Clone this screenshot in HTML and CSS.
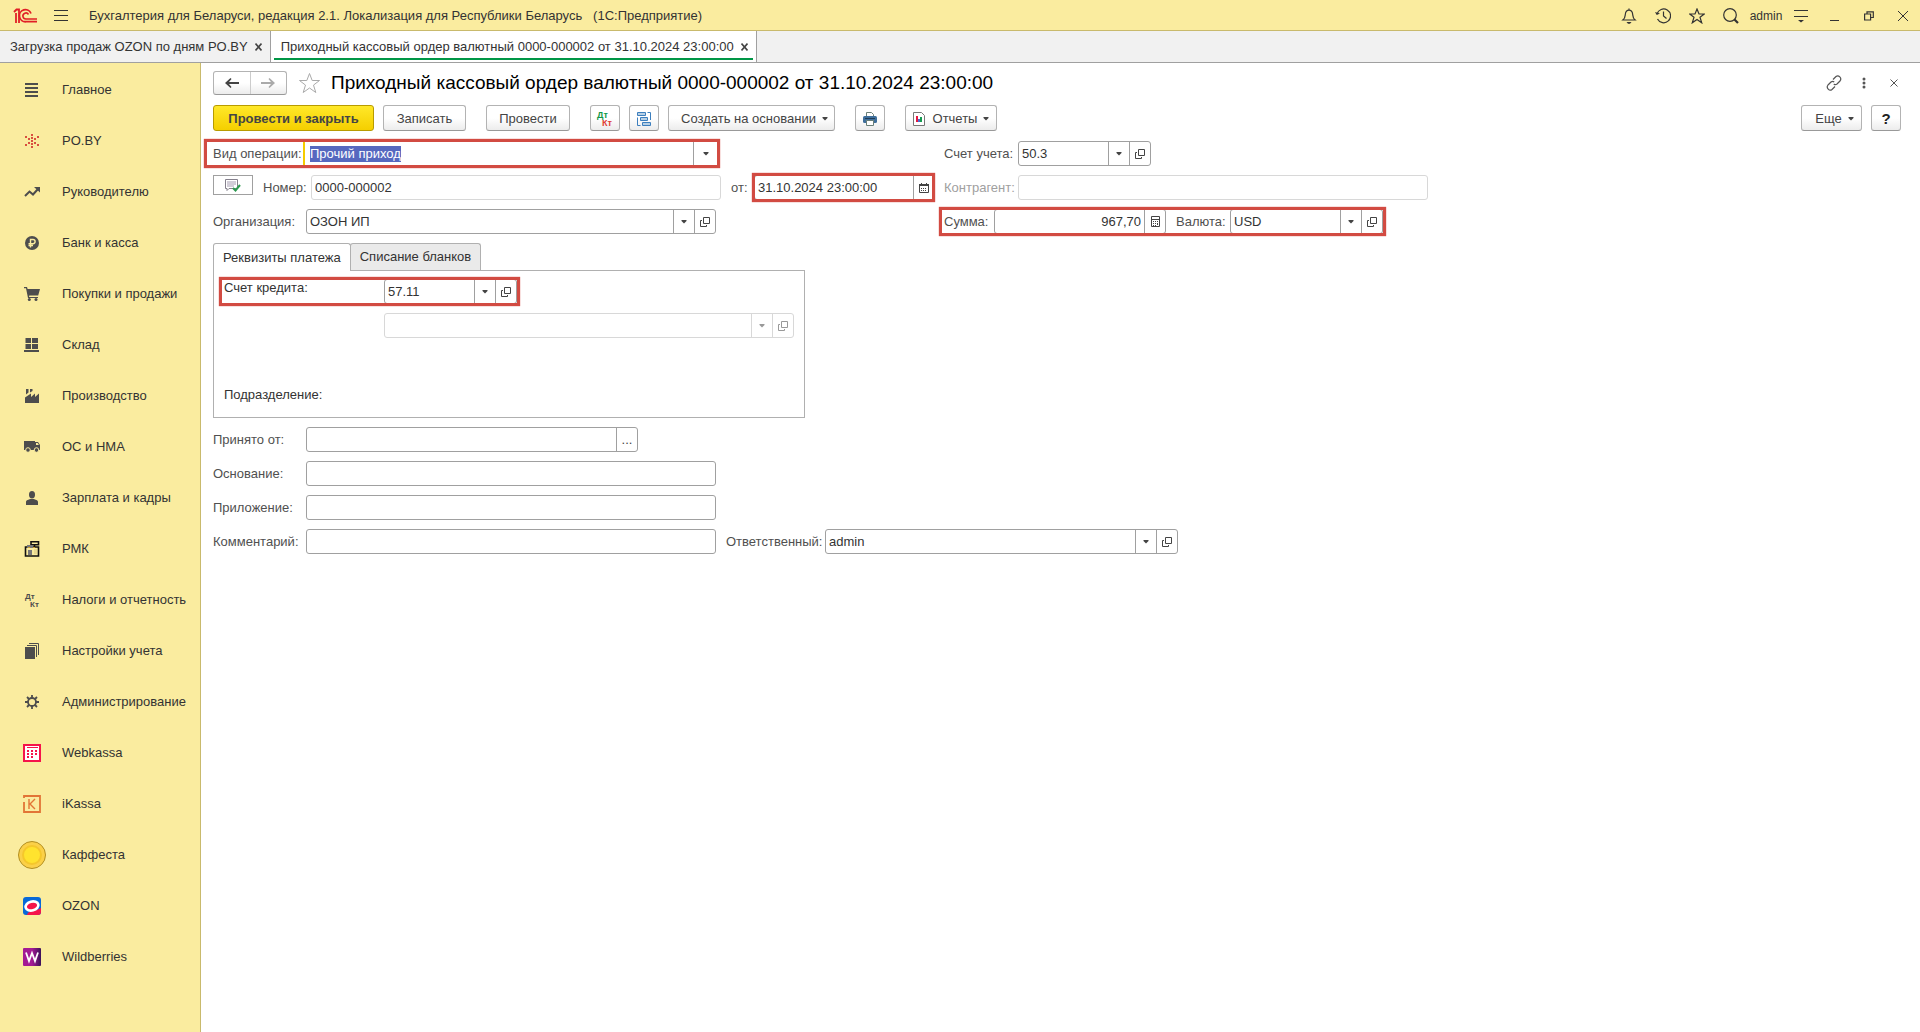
FILE: index.html
```html
<!DOCTYPE html>
<html lang="ru">
<head>
<meta charset="utf-8">
<title>Приходный кассовый ордер валютный</title>
<link rel="stylesheet" href="styles.css">
</head>
<body>
<svg class="sprite" aria-hidden="true">
  <symbol id="caret" viewBox="0 0 6 4"><path d="M.5 0h5v1L3 3.500.5 1z"/></symbol>
  <symbol id="open" viewBox="0 0 10 10"><path d="M3.500.5h6v6h-6zM2 3.500H.5v6h6V8" fill="none" stroke="currentColor"/></symbol>
</svg>

<header class="topbar">
  <svg class="logo" width="24" height="16" viewBox="0 0 24 16" fill="none" stroke="#e01f26"><path d="M1 4l2.500-2.500H6V15M3 5v10" stroke-width="1.800"/><path d="M18 5.500A6 6 0 1 0 13 13.700H24" stroke-width="1.800"/><path d="M15.500 6.500A3 3 0 1 0 13 11H24" stroke-width="1.600"/></svg>
  <button class="icon-btn" aria-label="Меню"><svg width="14" height="12" viewBox="0 0 14 12" stroke="currentColor"><path d="M0 .5h14M0 5.500h14M0 10.500h14"/></svg></button>
  <span class="app-title">Бухгалтерия для Беларуси, редакция 2.1. Локализация для Республики Беларусь &nbsp; (1С:Предприятие)</span>
  <div class="top-tools">
    <button class="icon-btn" aria-label="Уведомления"><svg width="16" height="16" viewBox="0 0 16 16" fill="none" stroke="currentColor" stroke-width="1.200"><path d="M8 .5V2M2 12c2-1.500 2-3 2.300-5.500C4.600 3.500 6 2.200 8 2.200s3.400 1.300 3.700 4.300C12 9 12 10.500 14 12zM1 12h14"/><path d="M5.500 14h5L9 15.700H7z" fill="currentColor" stroke="none"/></svg></button>
    <button class="icon-btn" aria-label="История"><svg width="16" height="16" viewBox="0 0 16 16" fill="none" stroke="currentColor" stroke-width="1.200"><path d="M2 6a6.900 6.900 0 1 1 .5 5M8.500 3.500V8l3 2.500"/><path d="M0 4l1.700 3L5 5.500z" fill="currentColor" stroke="none"/></svg></button>
    <button class="icon-btn" aria-label="Избранное"><svg width="16" height="16" viewBox="0 0 16 16" fill="none" stroke="currentColor" stroke-width="1.200"><path d="M8 1l2 5h5.300L11 9.300l1.700 5.500L8 11.500l-4.700 3.300L5 9.300.7 6H6z"/></svg></button>
    <button class="icon-btn" aria-label="Поиск"><svg width="16" height="16" viewBox="0 0 16 16" fill="none" stroke="currentColor" stroke-width="1.200"><circle cx="7" cy="7" r="6.300"/><path d="M11.500 11.500L15 15" stroke-width="2.200"/></svg></button>
    <span class="user">admin</span>
    <button class="icon-btn" aria-label="Настройки"><svg width="14" height="14" viewBox="0 0 14 14"><path d="M0 1.500h14M0 7.500h14" stroke="currentColor"/><path d="M4 11h6l-3 2.500z" fill="currentColor"/></svg></button>
    <button class="icon-btn" aria-label="Свернуть"><svg width="10" height="10" viewBox="0 0 10 10"><path d="M0 9.500h9" stroke="currentColor"/></svg></button>
    <button class="icon-btn" aria-label="Восстановить"><svg width="10" height="10" viewBox="0 0 10 10" fill="none" stroke="currentColor" stroke-width="1.200"><path d="M.6 3h6v6h-6zM3 3V.8h6.300V6.500H7"/></svg></button>
    <button class="icon-btn" aria-label="Закрыть"><svg width="10" height="10" viewBox="0 0 10 10" stroke="currentColor"><path d="M0 0l10 10M10 0L0 10"/></svg></button>
  </div>
</header>

<nav class="doc-tabs">
  <div class="doc-tab"><a href="#sales">Загрузка продаж OZON по дням PO.BY</a><button class="tab-close" aria-label="Закрыть вкладку"><svg width="7" height="8" viewBox="0 0 7 8" stroke="currentColor" stroke-width="1.600"><path d="M.5.5l6 7M6.500.5l-6 7"/></svg></button></div>
  <div class="doc-tab current"><a href="#order">Приходный кассовый ордер валютный 0000-000002 от 31.10.2024 23:00:00</a><button class="tab-close" aria-label="Закрыть вкладку"><svg width="7" height="8" viewBox="0 0 7 8" stroke="currentColor" stroke-width="1.600"><path d="M.5.5l6 7M6.500.5l-6 7"/></svg></button></div>
</nav>

<div class="workspace">
  <nav class="sidebar">
    <a href="#"><svg width="14" height="14" viewBox="0 0 14 14"><path d="M0 0h13v2H0zM0 4h13v2H0zM0 8h13v2H0zM0 12h13v2H0z"/></svg>Главное</a>
    <a href="#"><svg width="16" height="14" viewBox="0 0 16 14" fill="#d8503f"><path d="M7 0h2v2H7zM1 2h2v2H1zM13 2h2v2h-2zM7 3h2v2H7zM4 4h2v2H4zM10 4h2v2h-2zM7 6h2v2H7zM4 8h2v2H4zM10 8h2v2h-2zM1 10h2v2H1zM13 10h2v2h-2zM7 9h2v2H7zM7 12h2v2H7z"/></svg>PO.BY</a>
    <a href="#"><svg width="16" height="10" viewBox="0 0 16 10"><path d="M1 9l4.500-4.500 3.500 3L14 2" fill="none" stroke="currentColor" stroke-width="2"/><path d="M10 0h6v5.500z"/></svg>Руководителю</a>
    <a href="#"><svg width="14" height="14" viewBox="0 0 14 14"><circle cx="7" cy="7" r="7"/><path d="M5.500 11.500v-8H8a2 2 0 0 1 0 4.200H3.500M3.500 9.500H8" fill="none" stroke="#faec9f" stroke-width="1.400"/></svg>Банк и касса</a>
    <a href="#"><svg width="16" height="14" viewBox="0 0 16 14"><path d="M0 0h3l.6 2H16l-1.800 6.500H5.300L5 10h9v1H4L2 1.300H0z"/><circle cx="5.300" cy="12.500" r="1.500"/><circle cx="12" cy="12.500" r="1.500"/></svg>Покупки и продажи</a>
    <a href="#"><svg width="16" height="14" viewBox="0 0 16 14"><path d="M1.500 0H7v5H1.500zM8 0h6v5H8zM1.500 6H7v5H1.500zM8 6h6v5H8zM0 12h15v2H0z"/></svg>Склад</a>
    <a href="#"><svg width="14" height="14" viewBox="0 0 14 14"><path d="M0 14V8.500l6-4V8l4-3.500V8l4-3.500V14zM1 0h2.500v3.500L1 5.500zM5 0h2.500v2L5 3.500z"/></svg>Производство</a>
    <a href="#"><svg width="16" height="12" viewBox="0 0 16 12"><path d="M0 0h11v9H0zM11 1h3l2 3v5h-5z"/><path d="M12 2h1.700l1.200 2H12z" fill="#faec9f"/><circle cx="4" cy="9" r="2.300" stroke="#faec9f"/><circle cx="12.500" cy="9" r="2.300" stroke="#faec9f"/></svg>ОС и НМА</a>
    <a href="#"><svg width="12" height="14" viewBox="0 0 12 14"><ellipse cx="6" cy="3.700" rx="3" ry="3.700"/><path d="M0 14v-3c0-2 3-2.500 4-3h4c1 .5 4 1 4 3v3z"/></svg>Зарплата и кадры</a>
    <a href="#"><svg width="16" height="16" viewBox="0 0 16 16"><path d="M1.500 6h13v9h-13zM7 .8h7.500v3H7zM10.500 4v2" fill="none" stroke="#111" stroke-width="1.600"/><path d="M3 4h6v3H3zM4 9h4v5H4z" fill="#777"/><path d="M10 8h3v5h-3z" fill="#e9d98e"/><path d="M4 6h2v1H4zM9 6h2v1H9z" fill="#c99a26"/></svg>РМК</a>
    <a href="#"><svg width="16" height="16" viewBox="0 0 16 16" font-size="8" font-weight="bold"><text x="1" y="7">Дт</text><text x="6" y="15">Кт</text></svg>Налоги и отчетность</a>
    <a href="#"><svg width="14" height="16" viewBox="0 0 14 16"><path d="M0 4h10v12H0z"/><path d="M2 2.500h9.500V14M4 .5h9.500V12" fill="none" stroke="currentColor"/></svg>Настройки учета</a>
    <a href="#"><svg width="14" height="14" viewBox="0 0 14 14" fill="none" stroke="currentColor"><circle cx="7" cy="7" r="4" stroke-width="1.800"/><path d="M7 0v3M7 11v3M0 7h3M11 7h3M2 2l2 2M10 10l2 2M12 2l-2 2M4 10l-2 2" stroke-width="1.800"/></svg>Администрирование</a>
    <a href="#"><svg width="18" height="18" viewBox="0 0 18 18"><path d="M1 1h16v16H1z" fill="#fff" stroke="#f5144a" stroke-width="2"/><path d="M4 3h11v1H4zM4 6h2v2H4zM8 6h2v2H8zM12 6h2v2h-2zM4 9h2v2H4zM8 9h2v2H8zM12 9h2v2h-2zM4 12h2v2H4zM8 12h2v2H8z" fill="#f5144a"/></svg>Webkassa</a>
    <a href="#"><svg width="18" height="18" viewBox="0 0 18 18" fill="none" stroke="#e27536"><path d="M1 3V1h16v16H1V7" stroke-width="1.800"/><path d="M1 4v1.500" stroke="#faec9f" stroke-width="2"/><path d="M6 4v10M12 4L7 9l5 5" stroke-width="1.400"/></svg>iKassa</a>
    <a href="#"><svg width="28" height="28" viewBox="0 0 28 28"><circle cx="14" cy="14" r="13.500" fill="#fbd048" stroke="#b28f22"/><circle cx="14" cy="14" r="9" fill="#ffe32e" stroke="#f5c72b" stroke-width="2"/></svg>Каффеста</a>
    <a href="#"><svg width="18" height="18" viewBox="0 0 18 18"><rect width="18" height="18" rx="3" fill="#0869d8"/><path d="M4 18c1-5 8-3 14-7v4a3 3 0 0 1-3 3z" fill="#f5144a"/><ellipse cx="9" cy="9" rx="6.500" ry="4.500" transform="rotate(-15 9 9)" fill="#f5144a" stroke="#fff" stroke-width="2.600"/></svg>OZON</a>
    <a href="#"><svg width="18" height="18" viewBox="0 0 18 18"><defs><linearGradient id="wb"><stop offset=".5" stop-color="#a31a94"/><stop offset="1" stop-color="#3b1259"/></linearGradient></defs><rect width="18" height="18" rx="1" fill="url(#wb)"/><path d="M3 4.500l3 8.500 3-8 3 8 3-8.500" fill="none" stroke="#fff" stroke-width="1.800"/></svg>Wildberries</a>
  </nav>

  <main class="content">
    <div class="title-row">
      <div class="history">
        <button aria-label="Назад"><svg width="14" height="10" viewBox="0 0 14 10"><path d="M0 5l5.500-5 1 1L4 4h10v2H4l2.500 3-1 1z"/></svg></button>
        <button class="off" aria-label="Вперед"><svg width="14" height="10" viewBox="0 0 14 10"><path d="M14 5L8.500 0l-1 1L10 4H0v2h10L7.500 9l1 1z"/></svg></button>
      </div>
      <button class="icon-btn star" aria-label="В избранное"><svg width="23" height="22" viewBox="0 0 23 22" fill="none" stroke="#aaa"><path d="M11.500 1.500l2.700 7h7.300l-6 4.600 2.300 7.400-6.300-4.500-6.300 4.500 2.300-7.400-6-4.600h7.300z"/></svg></button>
      <h1>Приходный кассовый ордер валютный 0000-000002 от 31.10.2024 23:00:00</h1>
      <div class="window-tools">
        <button class="icon-btn" aria-label="Ссылка"><svg width="16" height="16" viewBox="0 0 16 16" fill="none" stroke="currentColor" stroke-width="1.200"><path d="M7 4.500l3-3c2.500-2 6.300 1.500 4 4.500l-3 3c-1 .8-2.300.8-3.200 0M9 11.500l-3 3c-2.500 2-6.300-1.500-4-4.500l3-3c1-.8 2.300-.8 3.200 0"/></svg></button>
        <button class="icon-btn" aria-label="Еще действия"><svg width="4" height="12" viewBox="0 0 4 12"><circle cx="2" cy="2" r="1.500"/><circle cx="2" cy="6" r="1.500"/><circle cx="2" cy="10" r="1.500"/></svg></button>
        <button class="icon-btn" aria-label="Закрыть"><svg width="8" height="8" viewBox="0 0 8 8" stroke="currentColor"><path d="M.5.5l7 7M7.500.5l-7 7"/></svg></button>
      </div>
    </div>

    <div class="commands">
      <button class="btn primary">Провести и закрыть</button>
      <button class="btn w-save">Записать</button>
      <button class="btn w-post lead">Провести</button>
      <button class="btn w-icon lead" aria-label="Дт Кт"><svg width="18" height="18" viewBox="0 0 18 18" font-size="9" font-weight="bold"><text x="1" y="8" fill="#109847">Дт</text><text x="6" y="16" fill="#e03c34">Кт</text></svg></button>
      <button class="btn w-icon" aria-label="Структура подчиненности"><svg width="14" height="15" viewBox="0 0 14 15" fill="#b6cfe5" stroke="#3c7fbe"><path d="M.5.5h8v3h-8zM3.500 5.500h7v3h-7zM5.500 10.500h8v3h-8z"/><path d="M10.500.5h3v7.500M.5 5.500v8h3" fill="none"/></svg></button>
      <button class="btn w-create">Создать на основании<svg class="caret" width="6" height="4"><use href="#caret"/></svg></button>
      <button class="btn w-icon lead" aria-label="Печать"><svg width="14" height="14" viewBox="0 0 14 14"><path d="M3.500.5h5l2 2V5h-7z" fill="#fff" stroke="#6a7f78"/><rect y="4" width="14" height="7" rx="1.500" fill="#3f6f9c"/><path d="M2 6h10v1H2z" fill="#1f3c58"/><path d="M3.500 8.500h7v5h-7z" fill="#fff" stroke="#6a7f78"/></svg></button>
      <button class="btn w-reports lead"><svg width="12" height="14" viewBox="0 0 12 14"><path d="M.5.5h8l3 3v10H.5z" fill="#fff" stroke="#777"/><path d="M3 4h2v6H3z" fill="#e5173f"/><path d="M5 7h2v3H5z" fill="#4a6ad0"/><path d="M7 5h2v5H7z" fill="#159a50"/></svg>Отчеты<svg class="caret" width="6" height="4"><use href="#caret"/></svg></button>
      <button class="btn w-more">Еще<svg class="caret" width="6" height="4"><use href="#caret"/></svg></button>
      <button class="btn w-icon help" aria-label="Справка">?</button>
    </div>

    <form class="order">
      <div class="pair">
        <div class="line"><div class="line marked kind"><label class="cap" for="kind">Вид операции:</label>
          <div class="field active grow"><input id="kind" value="Прочий приход" autofocus><button type="button" aria-label="Выбрать"><svg width="6" height="4"><use href="#caret"/></svg></button></div></div></div>
        <div class="line"><label class="cap-right" for="account">Счет учета:</label>
          <div class="field w-account"><input id="account" value="50.3"><button type="button" aria-label="Выбрать"><svg width="6" height="4"><use href="#caret"/></svg></button><button type="button" aria-label="Открыть"><svg width="10" height="10"><use href="#open"/></svg></button></div></div>

        <div class="line"><button type="button" class="status" aria-label="Проведен"><svg width="16" height="13" viewBox="0 0 16 13" fill="none"><path d="M.5.5h12v9H4l-2 2v-2H.5z" stroke="#85808c"/><path d="M2 3h9M2 5h9M2 7h7" stroke="#a49bb0"/><path d="M8 9l2.500 2.500L15 6" stroke="#2d9950" stroke-width="2"/></svg></button><label class="cap-number" for="number">Номер:</label>
          <div class="field muted w-full"><input id="number" value="0000-000002" readonly></div>
          <label class="cap-from" for="date">от:</label>
          <div class="marked tight grow"><div class="field"><input id="date" value="31.10.2024 23:00:00"><button type="button" aria-label="Календарь"><svg width="10" height="10" viewBox="0 0 10 10"><path d="M.5 1.500h9v8h-9z" fill="none" stroke="currentColor"/><path d="M0 1h10v2H0zM2 0h1v2H2zM7 0h1v2H7zM2 5h1v1H2zM4 5h1v1H4zM6 5h1v1H6zM2 7h1v1H2zM4 7h1v1H4zM6 7h1v1H6z"/></svg></button></div></div></div>
        <div class="line"><label class="cap-right faded" for="partner">Контрагент:</label>
          <div class="field muted w-full"><input id="partner" disabled></div></div>

        <div class="line"><label class="cap" for="org">Организация:</label>
          <div class="field w-full"><input id="org" value="ОЗОН ИП"><button type="button" aria-label="Выбрать"><svg width="6" height="4"><use href="#caret"/></svg></button><button type="button" aria-label="Открыть"><svg width="10" height="10"><use href="#open"/></svg></button></div></div>
        <div class="line"><div class="line marked"><label class="cap-sum" for="sum">Сумма:</label>
          <div class="field w-sum"><input id="sum" class="num" value="967,70"><button type="button" aria-label="Калькулятор"><svg width="9" height="11" viewBox="0 0 9 11"><path d="M.5.5h8v10h-8zM1 3.500h7" fill="none" stroke="currentColor"/><path d="M2 5h1v1H2zM4 5h1v1H4zM6 5h1v1H6zM2 7h1v1H2zM4 7h1v1H4zM6 7h1v2H6zM2 9h1v1H2zM4 9h1v1H4z"/></svg></button></div>
          <label class="cap-cur" for="cur">Валюта:</label>
          <div class="field w-cur"><input id="cur" value="USD"><button type="button" aria-label="Выбрать"><svg width="6" height="4"><use href="#caret"/></svg></button><button type="button" aria-label="Открыть"><svg width="10" height="10"><use href="#open"/></svg></button></div></div></div>
      </div>

      <div class="pages">
        <div class="page-tabs" role="tablist">
          <button type="button" role="tab" aria-selected="true" class="on">Реквизиты платежа</button>
          <button type="button" role="tab" aria-selected="false">Списание бланков</button>
        </div>
        <div class="page">
          <div class="line"><div class="line marked"><label class="cap-credit" for="credit">Счет кредита:</label>
            <div class="field w-account"><input id="credit" value="57.11"><button type="button" aria-label="Выбрать"><svg width="6" height="4"><use href="#caret"/></svg></button><button type="button" aria-label="Открыть"><svg width="10" height="10"><use href="#open"/></svg></button></div></div></div>
          <div class="line"><div class="field muted w-full sub"><input aria-label="Субконто" disabled><button type="button" disabled aria-label="Выбрать"><svg width="6" height="4"><use href="#caret"/></svg></button><button type="button" disabled aria-label="Открыть"><svg width="10" height="10"><use href="#open"/></svg></button></div></div>
          <p class="division">Подразделение:</p>
        </div>
      </div>

      <div class="line"><label class="cap" for="payer">Принято от:</label>
        <div class="field w-payer"><input id="payer"><button type="button" aria-label="Выбрать из списка">...</button></div></div>
      <div class="line"><label class="cap" for="reason">Основание:</label><div class="field w-full"><input id="reason"></div></div>
      <div class="line"><label class="cap" for="attach">Приложение:</label><div class="field w-full"><input id="attach"></div></div>
      <div class="line"><label class="cap" for="note">Комментарий:</label><div class="field w-full"><input id="note"></div>
        <label class="cap-owner" for="owner">Ответственный:</label>
        <div class="field w-owner"><input id="owner" value="admin"><button type="button" aria-label="Выбрать"><svg width="6" height="4"><use href="#caret"/></svg></button><button type="button" aria-label="Открыть"><svg width="10" height="10"><use href="#open"/></svg></button></div></div>
    </form>
  </main>
</div>
<script src="app.js"></script>
</body>
</html>
```
FILE: app.js
```js
const kind = document.getElementById("kind");
kind.focus();
kind.select();
```
FILE: styles.css
```css
* { box-sizing: border-box; }
body {
  margin: 0;
  min-height: 100vh;
  display: flex;
  flex-direction: column;
  background: #fff;
  color: #333;
  font: 13px/16px "Liberation Sans", Arial, sans-serif;
}
button, input { font: inherit; color: inherit; }
button { margin: 0; padding: 0; border: 0; background: none; }
a { color: inherit; text-decoration: none; }
svg { flex: none; }
svg:not([fill]) { fill: currentColor; }
.sprite { position: absolute; width: 0; height: 0; }
.icon-btn { display: flex; align-items: center; justify-content: center; }

.topbar {
  display: flex;
  align-items: center;
  height: 31px;
  padding: 1px 0 0 13px;
  background: #faec9f;
  border-bottom: 1px solid #c9ba6c;
}
.logo { margin-right: 5px; }
.topbar > .icon-btn { width: 40px; margin: 0 8px 0 -1px; }
.top-tools { display: flex; align-items: center; margin-left: auto; }
.top-tools .icon-btn { width: 34px; }
.user { width: 36px; text-align: center; font-size: 12px; }

.doc-tabs {
  display: flex;
  height: 32px;
  background: #f1f1f1;
  border-bottom: 1px solid #a0a0a0;
}
.doc-tab {
  display: flex;
  align-items: center;
  gap: 7px;
  padding: 0 8px 0 10px;
  border-right: 1px solid #a0a0a0;
}
.doc-tab.current {
  background: linear-gradient(#009646, #009646) 3px 27px / calc(100% - 6px) 2px no-repeat #fff;
}
.tab-close { display: flex; color: #444; }

.workspace { flex: 1; display: flex; }
.sidebar {
  flex: none;
  width: 201px;
  padding-top: 1px;
  background: #faec9f;
  border-right: 1px solid #c9ba6c;
}
.sidebar a {
  display: grid;
  grid-template-columns: 40px 1fr;
  align-items: center;
  height: 51px;
  padding-left: 12px;
  column-gap: 10px;
}
.sidebar svg { justify-self: center; color: #4d4d4d; }
.content { flex: 1; min-width: 0; padding: 8px 19px 16px 12px; }

.title-row { display: flex; align-items: center; height: 24px; }
.history, .btn {
  border: 1px solid #b3b3b3;
  border-bottom-color: #999;
  border-radius: 3px;
  background: linear-gradient(#fff 50%, #ececec);
}
.history { display: flex; width: 74px; height: 24px; }
.history button { flex: 1; display: flex; align-items: center; justify-content: center; color: #444; }
.history .off { color: #aaa; border-left: 1px solid #ccc; }
.star { margin: 0 10px 0 11px; }
h1 { margin: 0; color: #000; font-size: 19px; line-height: 24px; font-weight: normal; }
.window-tools { display: flex; align-items: center; margin-left: auto; color: #555; }
.window-tools .icon-btn { width: 30px; }
.window-tools .icon-btn:last-child { margin-right: -8px; }

.commands { display: flex; gap: 9px; margin-top: 10px; }
.btn {
  display: flex;
  align-items: center;
  justify-content: center;
  height: 26px;
  padding-top: 2px;
  color: #444;
}
.primary {
  width: 161px;
  background: linear-gradient(#ffe829, #f5cf00);
  border-color: #b89b00;
  font-weight: bold;
}
.w-save { width: 83px; }
.w-post { width: 84px; }
.w-icon { width: 30px; }
.w-create { width: 167px; padding-left: 6px; }
.w-reports { width: 92px; gap: 8px; }
.w-more { width: 61px; margin-left: auto; padding-left: 6px; }
.lead { margin-left: 11px; }
.caret { margin-left: 6px; }
.w-reports .caret { margin-left: -2px; }
.help { font-size: 15px; font-weight: bold; color: #222; }

.order { display: grid; gap: 9px; margin-top: 10px; color: #505050; }
.pair { display: grid; grid-template-columns: 722px auto; justify-content: start; gap: 9px; }
.line { display: flex; align-items: center; min-width: 0; }
label { flex: none; }
.grow { flex: 1; min-width: 0; }
.field {
  display: flex;
  height: 25px;
  border: 1px solid #a0a0a0;
  border-radius: 3px;
  background: #fff;
  color: #333;
}
.field input {
  flex: 1;
  min-width: 0;
  padding: 0 3px;
  border: 0;
  outline: 0;
  background: none;
}
.field .num { text-align: right; }
.field button {
  flex: none;
  width: 21px;
  display: flex;
  align-items: center;
  justify-content: center;
  border-left: 1px solid #a0a0a0;
  color: #444;
}
.field.muted, .field.muted button { border-color: #d8d8d8; }
.field.muted button { color: #999; }
.field.active { border: 2px solid #f5cc00; height: 29px; margin: -2px 0; }
.field.active input { padding: 0 5px; }
.field.active button { width: 24px; }
.field input::selection { background: #5668bf; color: #fff; }
.faded { color: #a0a0a0; }

.cap { width: 93px; }
.kind .cap { width: 90px; }
.cap-right { width: 74px; }
.cap-number { width: 48px; margin-left: 10px; }
.cap-from { width: 23px; margin-left: 10px; }
.cap-sum { width: 50px; }
.cap-cur { width: 54px; margin-left: 10px; }
.cap-credit { width: 160px; align-self: flex-start; padding-top: 1px; color: #333; }
.cap-owner { width: 99px; margin-left: 10px; }
.w-full { flex: none; width: 410px; }
.w-account { width: 133px; }
.w-sum { width: 172px; }
.w-cur { width: 153px; }
.w-payer { width: 332px; }
.w-owner { width: 353px; }
.status { flex: none; align-self: flex-start; height: 20px; width: 40px; display: flex; align-items: center; justify-content: center; border: 1px solid #a0a0a0; }

/* Red frame that draws attention to the fields to be checked */
.marked { position: relative; }
.marked::after {
  content: "";
  position: absolute;
  inset: -2px -3px -2px -5px;
  border: 3px solid #d24b42;
  box-shadow: 0 0 1px #d24b42;
  pointer-events: none;
}
.kind { width: 506px; }
.kind::after { inset: -2px -1px -2px -9px; }
.tight::after { inset: -2px 0 -2px -2px; }

.page-tabs { display: flex; }
.page-tabs button {
  height: 27px;
  padding: 0 9px;
  border: 1px solid #b0b0b0;
  border-bottom: 0;
  border-radius: 3px 3px 0 0;
  background: #eaeaea;
  color: #333;
}
.page-tabs button + button { margin-left: -1px; }
.page-tabs .on { position: relative; height: 28px; margin-bottom: -1px; background: #fff; }
.page {
  display: grid;
  align-content: start;
  gap: 9px;
  width: 592px;
  min-height: 148px;
  padding: 8px 10px;
  border: 1px solid #b0b0b0;
}
.sub { margin-left: 160px; }
.division { margin: 40px 0 0; color: #333; }
```
